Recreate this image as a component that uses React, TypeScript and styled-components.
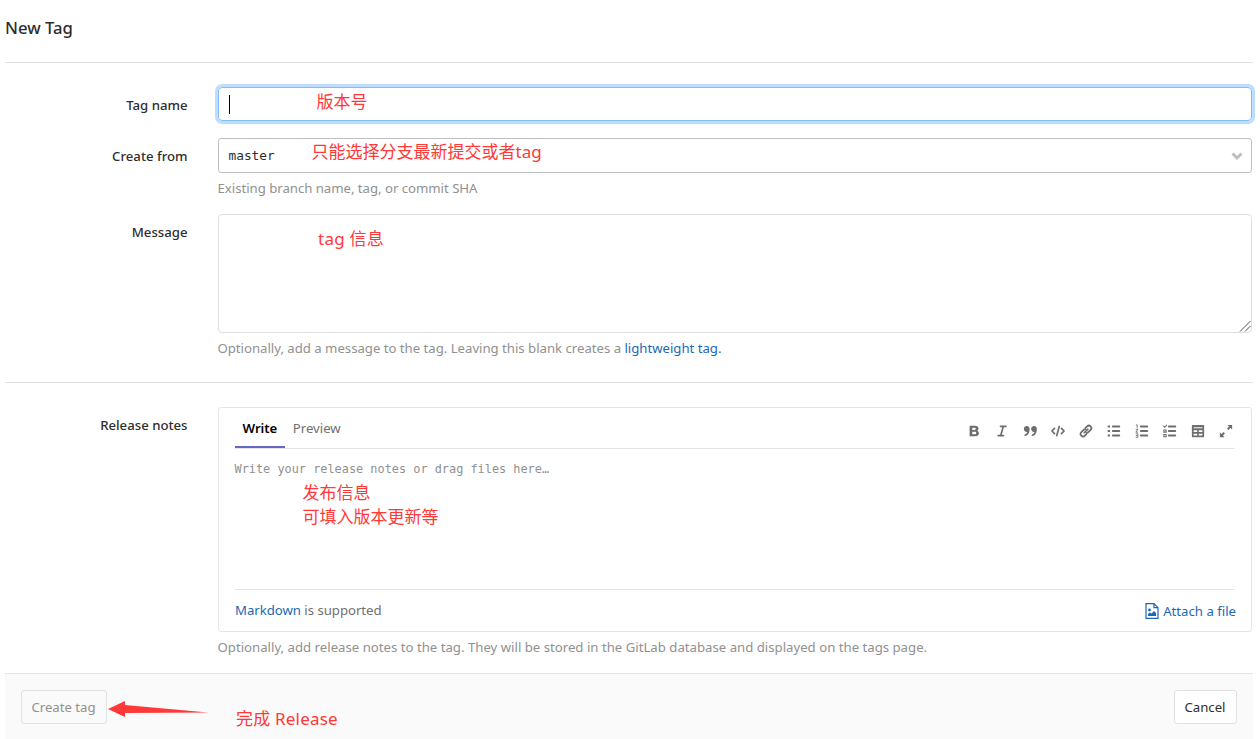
import React from "react";
import styled, { createGlobalStyle } from "styled-components";

const Global = createGlobalStyle`
  * { box-sizing: border-box; }
  body {
    margin: 0;
    background: #fff;
    color: #2e2e2e;
    font: 13.2px/20px "Noto Sans", "Noto Sans CJK SC", sans-serif;
  }
`;

const Page = styled.main`
  position: relative;
  height: 739px;
  padding: 0 7px 0 5px;
  overflow: hidden;
`;

const Title = styled.h1`
  margin: 0;
  height: 63px;
  padding-top: 16px;
  border-bottom: 1px solid #e1e1e1;
  font-size: 16.700px;
  line-height: 24px;
  font-weight: 500;
`;

const Row = styled.div<{ $top: number; $height: number }>`
  display: flex;
  height: ${(p) => p.$height}px;
  padding-top: ${(p) => p.$top}px;
`;

const Label = styled.label`
  width: 213px;
  flex: none;
  padding: 8px 30.500px 0 0;
  text-align: right;
  font-weight: 500;
`;

const Field = styled.div`
  width: 1034px;
  flex: none;
`;

const Hint = styled.p<{ $spacing?: number }>`
  margin: 5px 0 0 -0.500px;
  color: #919191;
  letter-spacing: ${(p) => p.$spacing ?? 0}px;
  white-space: nowrap;
`;

const Link = styled.a`
  color: #1b69b6;
  text-decoration: none;
`;

const FocusedInput = styled.div`
  display: flex;
  align-items: center;
  height: 34px;
  padding-left: 10px;
  border: 1px solid #80bdff;
  border-radius: 4px;
  box-shadow: 0 0 0 3px #bfdeff;
`;

const Caret = styled.span`
  width: 1px;
  height: 19px;
  background: #000;
`;

const Select = styled.div`
  display: flex;
  align-items: center;
  justify-content: space-between;
  height: 35px;
  padding: 0 8px 0 9.500px;
  border: 1px solid #bfbfbf;
  border-radius: 3px;
  font: 12.8px/20px "DejaVu Sans Mono", monospace;
`;

const MessageBox = styled.div`
  display: flex;
  align-items: flex-end;
  justify-content: flex-end;
  height: 119px;
  border: 1px solid #dfdfdf;
  border-radius: 4px;
`;

const Divider = styled.hr`
  margin: 0;
  border: 0;
  border-top: 1px solid #e1e1e1;
`;

const Editor = styled.section`
  height: 225px;
  padding: 0 16px;
  border: 1px solid #e5e5e5;
  border-radius: 3px;
`;

const EditorHeader = styled.div`
  display: flex;
  justify-content: space-between;
  height: 41px;
  border-bottom: 1px solid #e5e5e5;
`;

const Tabs = styled.div`
  display: flex;
`;

const Tab = styled.div<{ $active?: boolean }>`
  height: 40px;
  padding: 10px 8px 0 7.600px;
  color: ${(p) => (p.$active ? "#000" : "#707070")};
  font-weight: ${(p) => (p.$active ? 600 : 400)};
  letter-spacing: ${(p) => (p.$active ? -0.08 : 0)}px;
  border-bottom: ${(p) => (p.$active ? "2px solid #6666c4" : "0")};
`;

const Toolbar = styled.div`
  display: flex;
  align-items: center;
  gap: 14px;
  padding: 6px 2px 0 0;
`;

const Notes = styled.div`
  height: 141px;
  padding-top: 10px;
  border-bottom: 1px solid #e5e5e5;
  color: #919191;
  font: 11.88px/20px "DejaVu Sans Mono", monospace;
  text-indent: -0.500px;
`;

const EditorFooter = styled.div`
  display: flex;
  justify-content: space-between;
  padding-top: 10px;
  color: #707070;
  letter-spacing: -0.030px;
`;

const Attach = styled.a`
  display: flex;
  align-items: center;
  gap: 4px;
  height: 22px;
  margin-right: -1px;
  color: #1b69b6;
  letter-spacing: 0;
`;

const Actions = styled.footer`
  display: flex;
  justify-content: space-between;
  height: 66px;
  padding: 16px;
  border-top: 1px solid #e5e5e5;
  background: #fafafa;
`;

const Button = styled.button<{ $width: number; $disabled?: boolean }>`
  width: ${(p) => p.$width}px;
  height: 34px;
  padding: 0 1px 0 0;
  border: 1px solid #e1e1e1;
  border-radius: 3px;
  background: ${(p) => (p.$disabled ? "#fafafa" : "#fff")};
  color: ${(p) => (p.$disabled ? "#919191" : "#2e2e2e")};
  font: inherit;
  white-space: nowrap;
`;

const Note = styled.span<{ $x: number; $y: number; $spacing?: number }>`
  position: absolute;
  left: ${(p) => p.$x}px;
  top: ${(p) => p.$y}px;
  color: #ff3838;
  font-size: 17px;
  line-height: 24px;
  letter-spacing: ${(p) => p.$spacing ?? 0}px;
  white-space: pre;
`;

const Arrow = styled.svg`
  position: absolute;
  left: 108px;
  top: 700px;
`;

const Glyph = ({ children }: { children: React.ReactNode }) => (
  <svg width="14" height="14" viewBox="0 0 16 16" fill="#6e6e6e">{children}</svg>
);

const stroke = { fill: "none", stroke: "#6e6e6e", strokeWidth: 2, strokeLinecap: "round" as const, strokeLinejoin: "round" as const };

const Bars = () => <path d="M6.700 1.800H14a1.100 1.100 0 0 1 0 2.200H6.700a1.100 1.100 0 0 1 0-2.200zm0 5.100H14a1.100 1.100 0 0 1 0 2.200H6.700a1.100 1.100 0 0 1 0-2.200zm0 5.100H14a1.100 1.100 0 0 1 0 2.200H6.700a1.100 1.100 0 0 1 0-2.200z" />;

const Icons = () => (
  <Toolbar>
    <Glyph><path fillRule="evenodd" d="M3 2h6c2.600 0 4.100 1.200 4.100 3.200 0 1.200-.6 2.100-1.700 2.600 1.400.4 2.200 1.500 2.200 2.900 0 2.100-1.700 3.300-4.300 3.300H3zm3 2.200v2.600h2.500c1 0 1.600-.5 1.600-1.300s-.6-1.300-1.600-1.300zm0 4.700v2.900h2.700c1.200 0 1.900-.5 1.900-1.450s-.7-1.450-1.900-1.450z" /></Glyph>
    <Glyph><path {...stroke} strokeWidth={1.900} d="M6.300 2.800h6.200M3.500 13.200h6.200M9.500 2.800l-3 10.400" /></Glyph>
    <Glyph><path d="M4 2.200a3.300 3.300 0 0 1 3.500 3.700c0 4.200-1.700 7-4.700 7.900a1 1 0 0 1-.6-1.900c1.500-.6 2.300-1.600 2.600-2.900A3.400 3.400 0 1 1 4 2.200zm8.300 0a3.300 3.300 0 0 1 3.500 3.700c0 4.200-1.700 7-4.700 7.900a1 1 0 0 1-.6-1.900c1.500-.6 2.300-1.600 2.600-2.900a3.400 3.400 0 1 1-.8-6.800z" /></Glyph>
    <Glyph><path {...stroke} strokeWidth={1.900} d="M4 5L1.100 8 4 11M12 5l2.900 3-2.900 3M9.400 2.800L6.600 13.200" /></Glyph>
    <Glyph><path {...stroke} d="M6 10l4-4M7.500 4.500L9.300 2.700a2.800 2.800 0 0 1 4 4l-2.600 2.600a2.800 2.800 0 0 1-2 .8M8.500 11.500l-1.800 1.800a2.800 2.800 0 0 1-4-4l2.600-2.600a2.800 2.800 0 0 1 2-.8" /></Glyph>
    <Glyph><Bars /><path d="M.8 1.700h2.600V4H.8zm0 5.200h2.600v2.300H.8zm0 5.100h2.600v2.300H.8z" /></Glyph>
    <Glyph><Bars /><path fill="none" stroke="#6e6e6e" d="M1 1h1.500v3.500M.8 6h2.500L1 9.300h2.500M.8 11.200h2.500v4H.8M1 13.200h2" /></Glyph>
    <Glyph><Bars /><path fill="none" stroke="#6e6e6e" strokeWidth={1.200} d="M.5 2.200L2 3.700 4.500.9M1 6.800h2.600v2.500H1zM1 12h2.600v2.500H1z" /></Glyph>
    <Glyph><path fillRule="evenodd" d="M2 1h12a1 1 0 0 1 1 1v12a1 1 0 0 1-1 1H2a1 1 0 0 1-1-1V2a1 1 0 0 1 1-1zm1 2.700v1.200h10V3.700zm0 3.400v2h4.100v-2zm5.900 0v2H13v-2zM3 11v2h4.100v-2zm5.900 0v2H13v-2z" /></Glyph>
    <Glyph><path d="M9.600 1H15v5.400l-1.900-1.900L10.800 6.800 9.200 5.200l2.300-2.300zM6.400 15H1V9.600l1.900 1.900 2.300-2.300 1.600 1.600-2.300 2.300z" /></Glyph>
  </Toolbar>
);

export default function App() {
  return (
    <>
      <Global />
      <Page>
        <Title>New Tag</Title>
        <Row $top={24} $height={75}>
          <Label>Tag name</Label>
          <Field><FocusedInput><Caret /></FocusedInput></Field>
        </Row>
        <Row $top={0} $height={76}>
          <Label>Create from</Label>
          <Field>
            <Select>
              master
              <svg width="12" height="8" viewBox="0 0 12 8"><path d="M1.500 1.500L6 6l4.500-4.500" fill="none" stroke="#bdbdbd" strokeWidth="2.800" /></svg>
            </Select>
            <Hint $spacing={-0.025}>Existing branch name, tag, or commit SHA</Hint>
          </Field>
        </Row>
        <Row $top={0} $height={168}>
          <Label>Message</Label>
          <Field>
            <MessageBox>
              <svg width="12" height="12" viewBox="0 0 12 12"><path d="M1 11.500L11.500 1M6 11.500L11.500 6" stroke="#555" strokeWidth="1" fill="none" /></svg>
            </MessageBox>
            <Hint $spacing={-0.018}>Optionally, add a message to the tag. Leaving this blank creates a <Link>lightweight tag.</Link></Hint>
          </Field>
        </Row>
        <Divider />
        <Row $top={24} $height={290}>
          <Label>Release notes</Label>
          <Field>
            <Editor>
              <EditorHeader>
                <Tabs><Tab $active>Write</Tab><Tab>Preview</Tab></Tabs>
                <Icons />
              </EditorHeader>
              <Notes>Write your release notes or drag files here…</Notes>
              <EditorFooter>
                <span><Link>Markdown</Link> is supported</span>
                <Attach>
                  <svg width="14" height="16" viewBox="0 0 14 16"><path d="M1 .7h8l4 4v10.600H1zM9 .7v4h4" fill="none" stroke="#1b69b6" strokeWidth="1.200" /><path d="M3 13v-2l2-1.500 1.500 1L9 8l2 2v3z" fill="#1b69b6" /><circle cx="4.500" cy="7" r="1.400" fill="#1b69b6" /></svg>
                  Attach a file
                </Attach>
              </EditorFooter>
            </Editor>
            <Hint>Optionally, add release notes to the tag. They will be stored in the GitLab database and displayed on the tags page.</Hint>
          </Field>
        </Row>
        <Actions>
          <Button $width={86} $disabled>Create tag</Button>
          <Button $width={63}>Cancel</Button>
        </Actions>
        <Note $x={316.5} $y={90}>版本号</Note>
        <Note $x={311.5} $y={140}>只能选择分支最新提交或者tag</Note>
        <Note $x={318} $y={227} $spacing={0.25}>tag 信息</Note>
        <Note $x={302.5} $y={481}>{"发布信息\n可填入版本更新等"}</Note>
        <Note $x={236} $y={707} $spacing={0.2}>完成 Release</Note>
        <Arrow width="102" height="18" viewBox="0 0 102 18"><path d="M0 9L17 1v4l83 7.500L17 13v4z" fill="#ff3838" /></Arrow>
      </Page>
    </>
  );
}
